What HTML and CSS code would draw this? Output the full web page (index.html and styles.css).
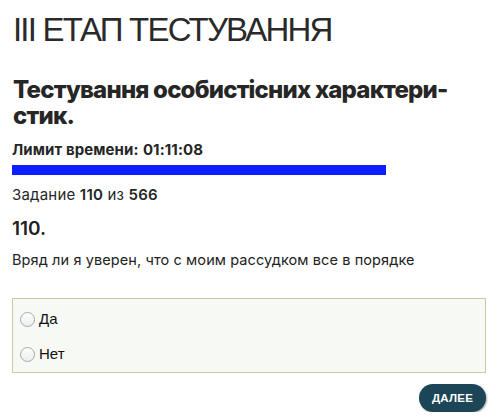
FILE: index.html
```html
<!DOCTYPE html>
<html lang="ru">
<head>
<meta charset="utf-8">
<link rel="stylesheet" href="styles.css">
</head>
<body>
<div class="page">
  <h1 class="stage">III ЕТАП ТЕСТУВАННЯ</h1>
  <h2 class="test-title">Тестування особистісних характери-<br>стик.</h2>
  <div class="timer"><b>Лимит времени:</b> <b>01:11:08</b></div>
  <div class="progress"></div>
  <div class="counter">Задание <b>110</b> из <b>566</b></div>
  <div class="qnum">110.</div>
  <div class="question">Вряд ли я уверен, что с моим рассудком все в порядке</div>
  <div class="options">
    <label class="option"><span class="radio"></span><span class="opt-text">Да</span></label>
    <label class="option"><span class="radio"></span><span class="opt-text">Нет</span></label>
  </div>
  <div class="actions">
    <button class="next">ДАЛЕЕ</button>
  </div>
</div>
</body>
</html>
```
FILE: styles.css
```css
* { box-sizing: border-box; }
html, body { margin: 0; padding: 0; background: #fff; }
body { font-family: "Inter", "Liberation Sans", sans-serif; color: #222; }
.page { padding: 10px 10px 0 12px; display: flex; flex-direction: column; }
.stage {
  margin: 0 0 0 1px;
  font-family: "Liberation Sans", sans-serif;
  font-weight: 400;
  font-size: 33px;
  line-height: 40px;
  letter-spacing: -1.8px;
  color: #2a2a2a;
}
.test-title {
  margin: 27px 0 0 1px;
  font-family: "Inter", sans-serif;
  font-weight: 800;
  font-size: 24px;
  line-height: 26px;
  letter-spacing: -0.8px;
  color: #262626;
}
.timer {
  margin-top: 12px;
  font-size: 15px;
  line-height: 18px;
  letter-spacing: 0.1px;
  color: #262626;
}
.progress {
  margin-top: 6px;
  width: 374px;
  height: 10px;
  background: #0c1ffc;
}
.counter {
  margin-top: 11px;
  font-size: 15px;
  line-height: 18px;
  letter-spacing: 0.2px;
  color: #262626;
}
.counter b { font-weight: 600; }
.qnum {
  margin-top: 14px;
  font-size: 19px;
  font-weight: 600;
  line-height: 22px;
  letter-spacing: 0;
  color: #222;
}
.question {
  margin-top: 10px;
  font-size: 14.5px;
  line-height: 20px;
  letter-spacing: 0.1px;
}
.options {
  margin-top: 28px;
  width: 474px;
  border: 1px solid #c6cca8;
  background: #f7f9f4;
  padding: 9px 7px 7px;
  display: flex;
  flex-direction: column;
  gap: 13px;
}
.option {
  display: flex;
  align-items: center;
  gap: 4px;
  font-family: "Liberation Sans", sans-serif;
  font-size: 15px;
  line-height: 22px;
  color: #111;
}
.radio {
  width: 15px;
  height: 15px;
  border-radius: 50%;
  border: 1px solid #a9a9a9;
  background: linear-gradient(#fdfdfd, #eee);
}
.actions { display: flex; justify-content: flex-end; margin-top: 11px; padding-right: 0; }
.next {
  width: 67px;
  height: 28px;
  border: none;
  border-radius: 14px;
  background: #1c4658;
  color: #fff;
  font-family: "Liberation Sans", sans-serif;
  font-weight: 700;
  font-size: 11.5px;
  letter-spacing: 0.2px;
  box-shadow: 1px 1px 2px rgba(0,0,0,0.35);
  padding: 0;
}
```
